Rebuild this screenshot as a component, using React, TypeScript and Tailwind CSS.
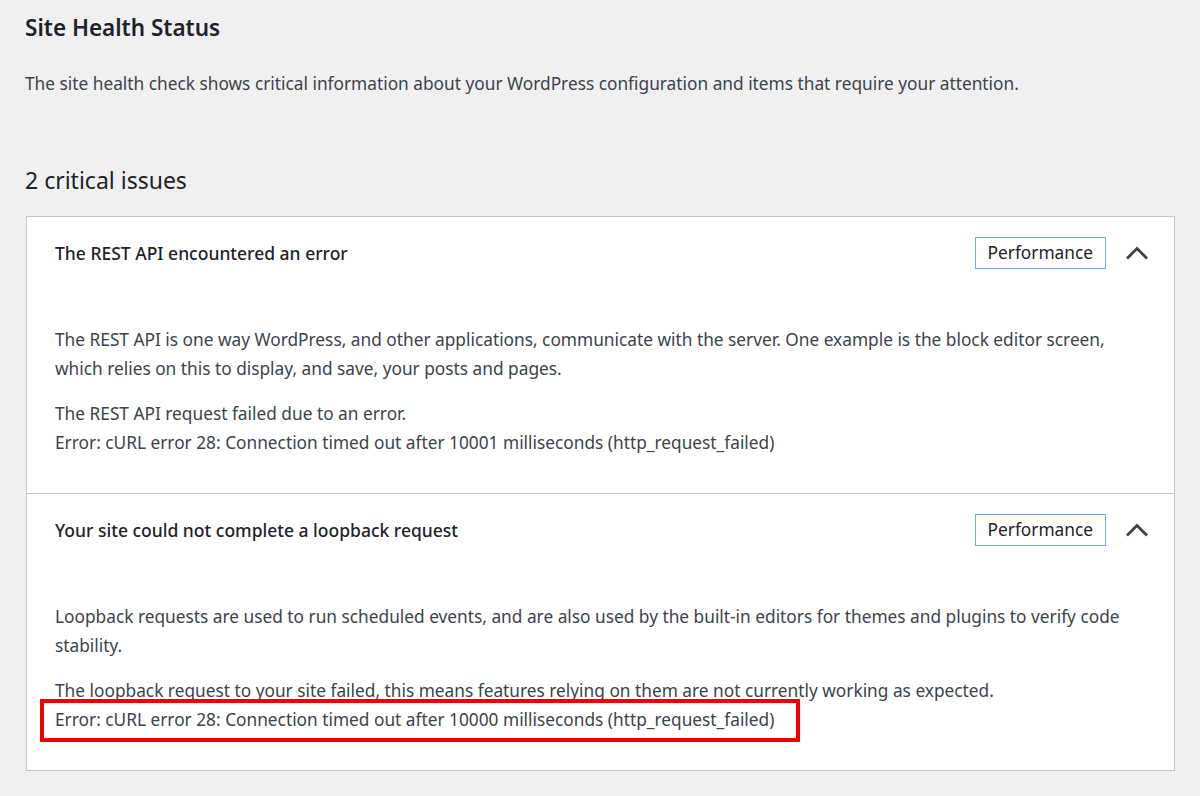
import React from "react";

type Issue = {
  title: string;
  paragraphs: string[][];
  highlightLast?: boolean;
};

const issues: Issue[] = [
  {
    title: "The REST API encountered an error",
    paragraphs: [
      [
        "The REST API is one way WordPress, and other applications, communicate with the server. One example is the block editor screen, which relies on this to display, and save, your posts and pages.",
      ],
      [
        "The REST API request failed due to an error.",
        "Error: cURL error 28: Connection timed out after 10001 milliseconds (http_request_failed)",
      ],
    ],
  },
  {
    title: "Your site could not complete a loopback request",
    paragraphs: [
      [
        "Loopback requests are used to run scheduled events, and are also used by the built-in editors for themes and plugins to verify code stability.",
      ],
      [
        "The loopback request to your site failed, this means features relying on them are not currently working as expected.",
        "Error: cURL error 28: Connection timed out after 10000 milliseconds (http_request_failed)",
      ],
    ],
    highlightLast: true,
  },
];

function ChevronUp() {
  return (
    <svg width="22" height="14" viewBox="0 0 22 14" fill="none" aria-hidden="true">
      <path d="M2 11.5 L11 2.5 L20 11.5" stroke="#3c434a" strokeWidth="2.8" strokeLinecap="square" />
    </svg>
  );
}

function IssueItem({ issue, first }: { issue: Issue; first: boolean }) {
  return (
    <div className={first ? "" : "border-t border-[#c3c4c7]"}>
      <div className="flex h-[72px] items-center pl-[28px] pr-[26px]">
        <h4 className="flex-1 text-[17.5px] font-medium text-[#1d2327]">{issue.title}</h4>
        <span className="flex h-[32px] items-center border border-[#72aee6] px-[12px] text-[17.3px] text-[#1d2327]">
          Performance
        </span>
        <span className="ml-[20px] flex w-[22px] justify-center">
          <ChevronUp />
        </span>
      </div>
      <div className="flex flex-col gap-[16px] pl-[28px] pr-[18px] pt-[36px] pb-[36px] text-[17.3px] leading-[29px] text-[#3c434a]">
        {issue.paragraphs.map((lines, pi) => (
          <p key={pi}>
            {lines.map((line, li) => {
              const isLast = pi === issue.paragraphs.length - 1 && li === lines.length - 1;
              return (
                <React.Fragment key={li}>
                  {li > 0 && <br />}
                  {isLast && issue.highlightLast ? (
                    <span className="relative inline-block">
                      {line}
                      <span className="pointer-events-none absolute -left-[15px] -right-[26px] -top-[6px] -bottom-[8px] border-[4px] border-[#ee0000]" />
                    </span>
                  ) : (
                    line
                  )}
                </React.Fragment>
              );
            })}
          </p>
        ))}
      </div>
    </div>
  );
}

export default function App() {
  return (
    <div
      className="min-h-[796px] bg-[#f0f0f1] px-[25px] pt-[13px]"
      style={{ fontFamily: '"Noto Sans", "Open Sans", Arial, sans-serif' }}
    >
      <h1 className="text-[22.5px] font-semibold leading-[30px] text-[#1d2327]">Site Health Status</h1>
      <p className="mt-[27px] text-[17.3px] leading-[28px] text-[#3c434a]">
        The site health check shows critical information about your WordPress configuration and items that require your attention.
      </p>
      <h2 className="mt-[66px] text-[23px] leading-[32px] text-[#1d2327]">2 critical issues</h2>
      <div className="mt-[20px] ml-[1px] w-[1149px] border border-[#c3c4c7] bg-white">
        {issues.map((issue, i) => (
          <IssueItem key={i} issue={issue} first={i === 0} />
        ))}
      </div>
    </div>
  );
}
